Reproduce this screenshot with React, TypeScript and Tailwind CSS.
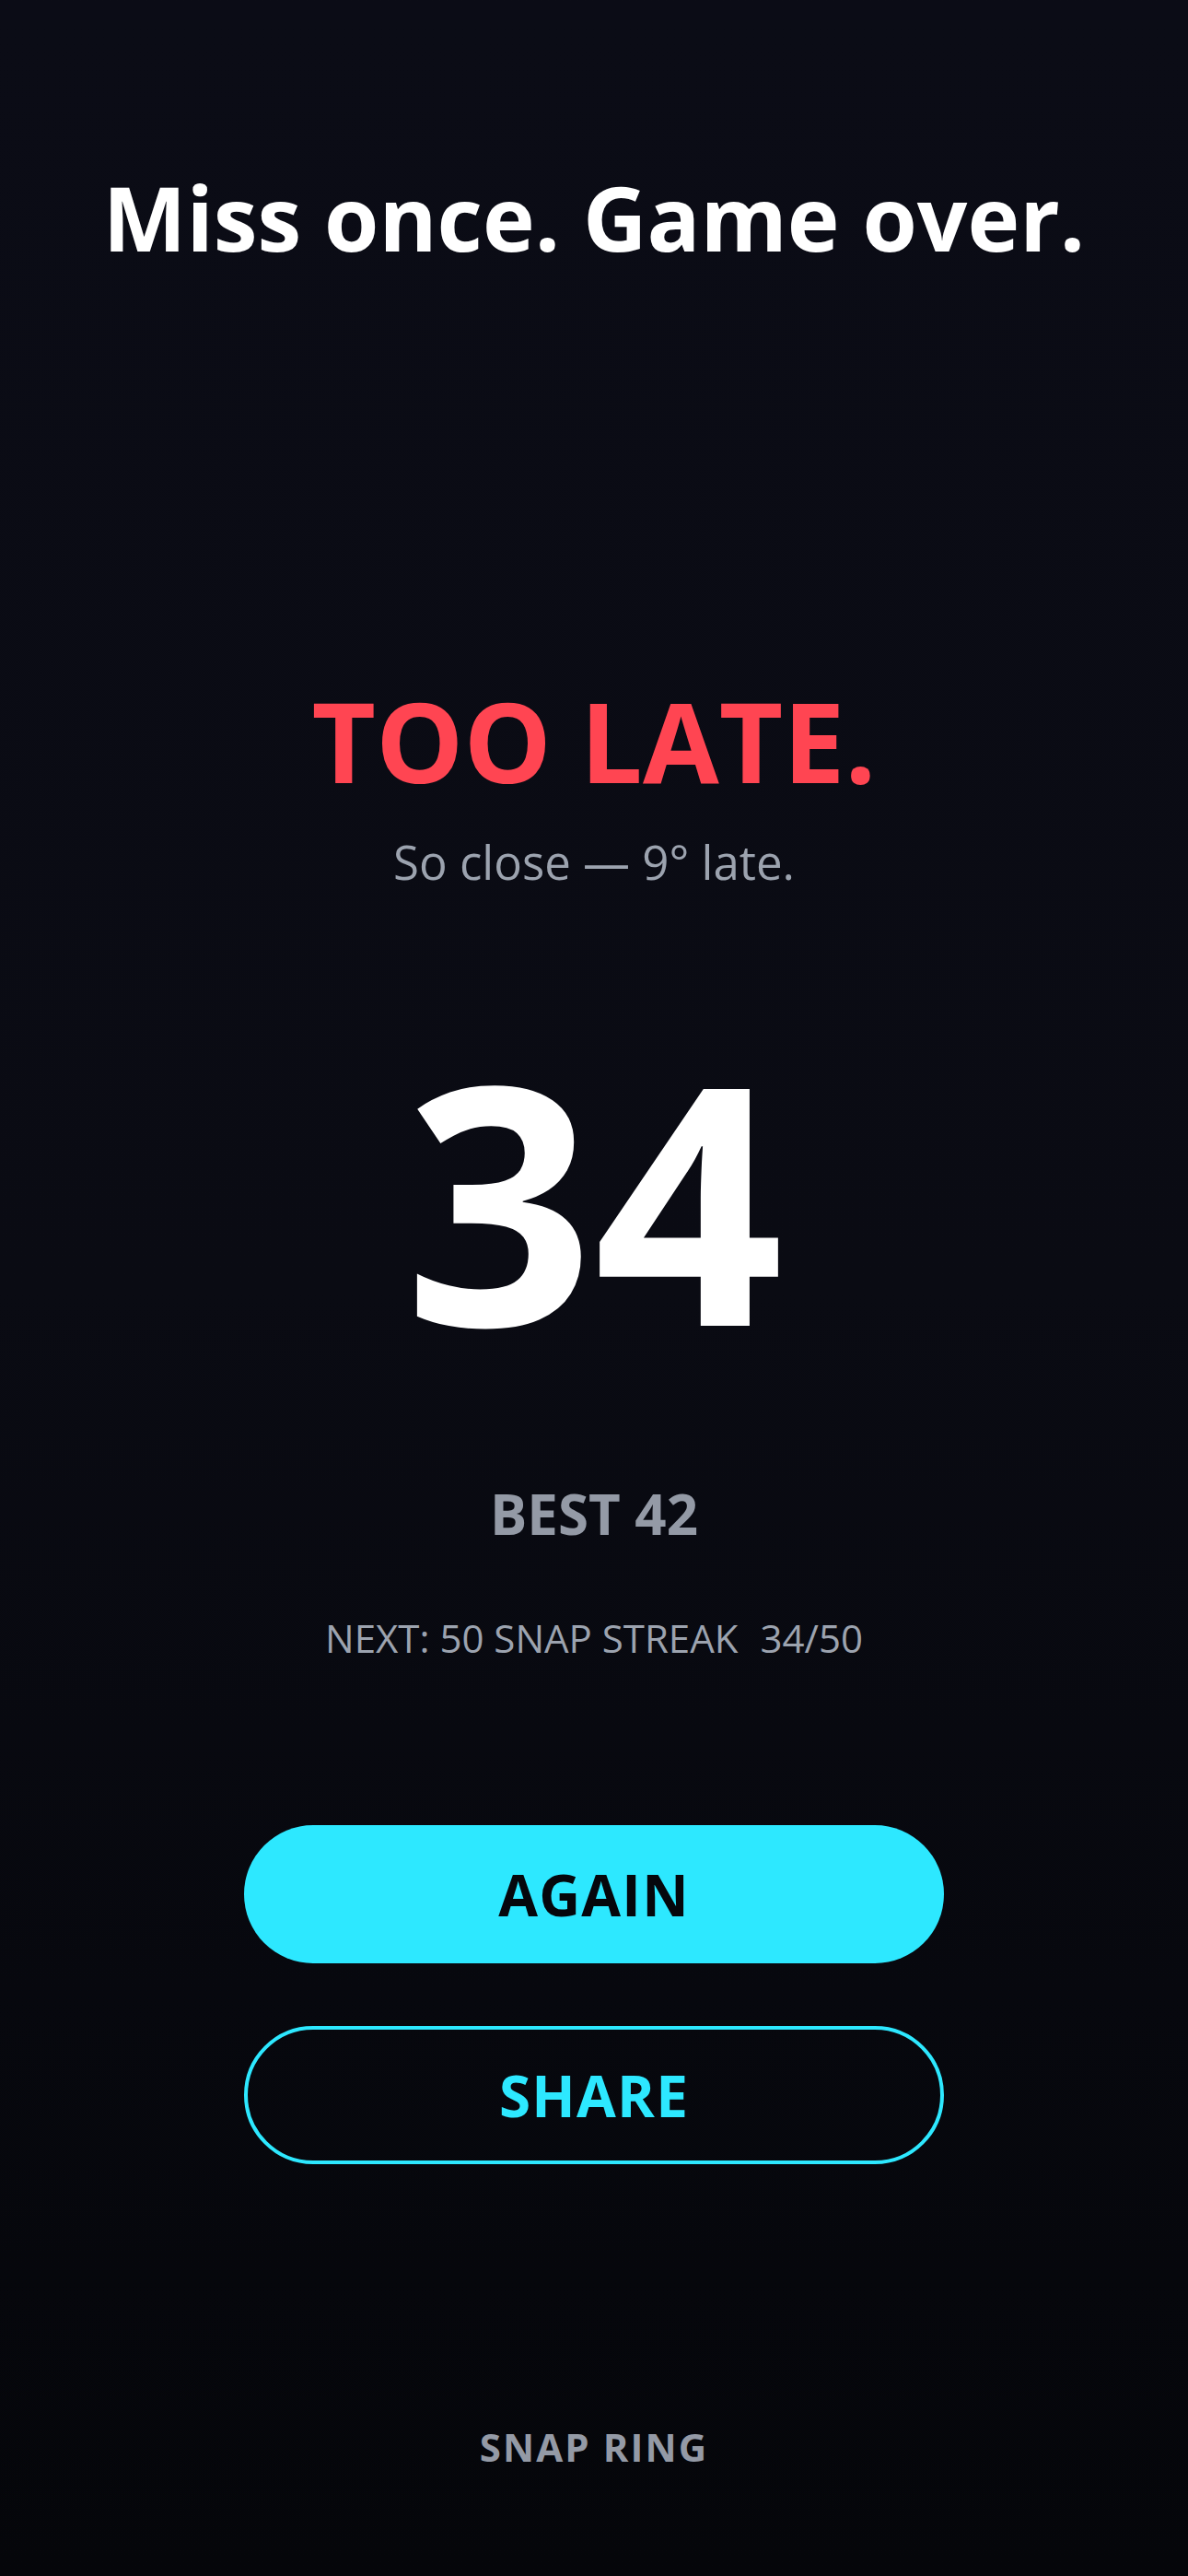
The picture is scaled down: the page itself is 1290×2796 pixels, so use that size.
import React from 'react';

// Game over screen for Snap Ring
const GameOver: React.FC = () => {
  const score = 34;
  const best = 42;
  const goal = 50;

  return (
    <div
      className="w-full min-h-screen flex flex-col items-center bg-gradient-to-b from-[#0b0c16] via-[#0a0b13] to-[#05060a] text-white"
      style={{ fontFamily: '"Open Sans", "Noto Sans", sans-serif' }}
    >
      {/* Header */}
      <h1 className="pt-[188px] text-[96px] leading-none font-bold text-white">
        Miss once. Game over.
      </h1>

      {/* Result */}
      <div className="mt-[460px] text-[120px] leading-none font-bold text-[#ff4552]">TOO LATE.</div>
      <div className="mt-[46px] text-[51px] leading-none font-normal text-[#9ca3af]">
        So close — 9° late.
      </div>

      {/* Score */}
      <div className="mt-[158px] text-[360px] leading-none font-bold text-white">{score}</div>

      <div className="mt-[134px] text-[60px] leading-none font-bold text-[#949aa6]">BEST {best}</div>

      <div className="mt-[84px] flex gap-[24px] text-[42px] leading-none font-normal text-[#9ca3af]">
        <span>NEXT: {goal} SNAP STREAK</span>
        <span>
          {score}/{goal}
        </span>
      </div>

      {/* Actions */}
      <div className="mt-[182px] flex flex-col gap-[68px]">
        <button className="w-[760px] h-[150px] rounded-full bg-[#2de8ff] text-[#05070c] text-[62px] font-bold tracking-[0.02em]">
          AGAIN
        </button>
        <button className="w-[760px] h-[150px] rounded-full border-4 border-[#2de8ff] bg-transparent text-[#2de8ff] text-[62px] font-bold tracking-[0.02em]">
          SHARE
        </button>
      </div>

      {/* Footer */}
      <div className="mt-[286px] text-[42px] leading-none font-bold tracking-[0.05em] text-[#949aa6]">
        SNAP RING
      </div>
    </div>
  );
};

export default function App() {
  return <GameOver />;
}
